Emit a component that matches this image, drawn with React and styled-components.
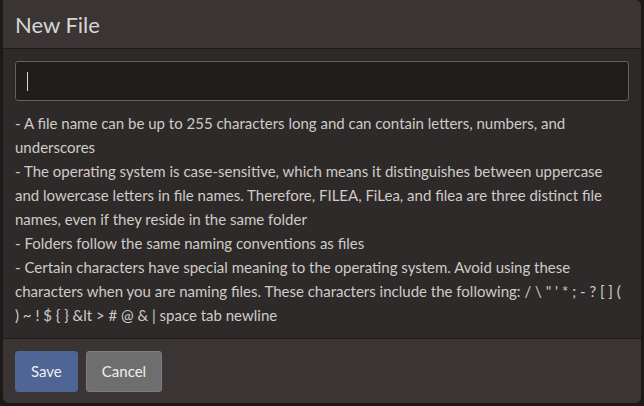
import React from "react";
import styled, { createGlobalStyle } from "styled-components";

const GlobalStyle = createGlobalStyle`
  html, body {
    margin: 0;
    padding: 0;
    background: #1c1a19;
  }
  body {
    font-family: Lato, "Liberation Sans", sans-serif;
  }
`;

const Backdrop = styled.div`
  width: 644px;
  height: 406px;
  padding: 0 3px 3px 3px;
  box-sizing: border-box;
  background: #1c1a19;
`;

const Modal = styled.div`
  height: 100%;
  display: flex;
  flex-direction: column;
  background: #2e2a29;
  border-radius: 0 6px 6px 6px;
  overflow: hidden;
`;

const Header = styled.div`
  height: 49px;
  box-sizing: border-box;
  padding: 0 12px;
  display: flex;
  align-items: center;
  background: #3a3534;
  border-bottom: 1px solid #1f1c1b;
`;

const Title = styled.h3`
  margin: 0;
  font-size: 22px;
  font-weight: 400;
  color: #d8d6d4;
`;

const Body = styled.div`
  flex: 1;
  padding: 12px 12px 0 12px;
`;

const InputWrap = styled.div`
  position: relative;
`;

const NameInput = styled.input`
  display: block;
  width: 100%;
  height: 40px;
  box-sizing: border-box;
  padding: 0 12px;
  background: #211d1c;
  border: 1px solid #65605e;
  border-radius: 3px;
  color: #e0e0e0;
  font-family: inherit;
  font-size: 16px;
  outline: none;
  caret-color: transparent;
`;

/* fake caret so the empty field shows its cursor in a still picture */
const Caret = styled.span`
  position: absolute;
  left: 12px;
  top: 11px;
  width: 1px;
  height: 19px;
  background: #d8d6d4;
  pointer-events: none;
`;

const Rules = styled.div`
  margin-top: 10px;
  padding-right: 4px;
  font-size: 15px;
  line-height: 24px;
  color: #cfcbc8;
`;

const Footer = styled.div`
  height: 65px;
  box-sizing: border-box;
  display: flex;
  align-items: center;
  gap: 8px;
  padding: 0 12px;
  background: #3a3534;
  border-top: 1px solid #1f1c1b;
`;

const Button = styled.button`
  height: 41px;
  padding: 0 15px;
  border-radius: 3px;
  font-family: inherit;
  font-size: 15px;
  color: #eeeeee;
  background: ${(p) => (p.$primary ? "#4e6596" : "#6e6e6e")};
  border: 1px solid ${(p) => (p.$primary ? "#4e6596" : "#7c7c7c")};
  cursor: pointer;
`;

const lines = [
  "- A file name can be up to 255 characters long and can contain letters, numbers, and underscores",
  "- The operating system is case-sensitive, which means it distinguishes between uppercase and lowercase letters in file names. Therefore, FILEA, FiLea, and filea are three distinct file names, even if they reside in the same folder",
  "- Folders follow the same naming conventions as files",
  "- Certain characters have special meaning to the operating system. Avoid using these characters when you are naming files. These characters include the following: / \\ \" ' * ; - ? [ ] ( ) ~ ! $ { } &lt > # @ & | space tab newline",
];

export default function App() {
  return (
    <>
      <GlobalStyle />
      <Backdrop>
        <Modal>
          <Header>
            <Title>New File</Title>
          </Header>
          <Body>
            <InputWrap>
              <NameInput />
              <Caret />
            </InputWrap>
            <Rules>
              {lines.map((l, i) => (
                <div key={i}>{l}</div>
              ))}
            </Rules>
          </Body>
          <Footer>
            <Button $primary>Save</Button>
            <Button>Cancel</Button>
          </Footer>
        </Modal>
      </Backdrop>
    </>
  );
}
